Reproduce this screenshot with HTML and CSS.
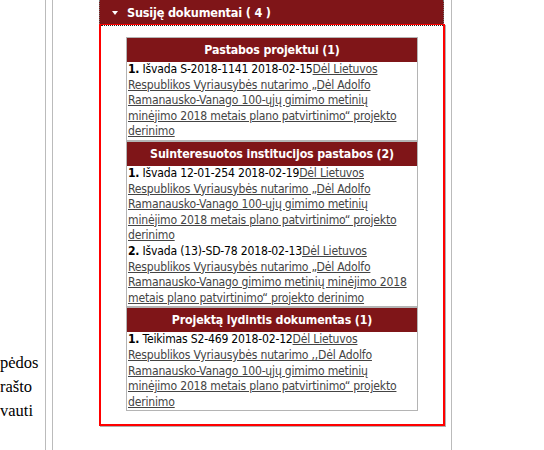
FILE: index.html
```html
<!DOCTYPE html>
<html lang="lt">
<head>
<meta charset="utf-8">
<link rel="stylesheet" href="styles.css">
</head>
<body>
<div class="page">
  <div class="left">
    <div class="left-text">
      <div>pėdos</div>
      <div>rašto</div>
      <div>vauti</div>
    </div>
  </div>
  <div class="main">
    <div class="panel">
      <div class="panel-head">
        <svg class="tri" width="6" height="4" viewBox="0 0 6 4"><polygon points="0,0 6,0 3,4" fill="#fff"/></svg>
        <span>Susiję dokumentai ( 4 )</span>
      </div>
      <div class="panel-box">
        <div class="dots"></div>
        <div class="docs">
          <div class="sec">
            <div class="sec-head">Pastabos projektui (1)</div>
            <div class="sec-body">
              <div class="item"><b>1.</b> Išvada S-2018-1141 2018-02-15<a href="#">Dėl Lietuvos Respublikos Vyriausybės nutarimo „Dėl Adolfo Ramanausko-Vanago 100-ųjų gimimo metinių minėjimo 2018 metais plano patvirtinimo“ projekto derinimo</a></div>
            </div>
          </div>
          <div class="sec">
            <div class="sec-head">Suinteresuotos institucijos pastabos (2)</div>
            <div class="sec-body">
              <div class="item"><b>1.</b> Išvada 12-01-254 2018-02-19<a href="#">Dėl Lietuvos Respublikos Vyriausybės nutarimo „Dėl Adolfo Ramanausko-Vanago 100-ųjų gimimo metinių minėjimo 2018 metais plano patvirtinimo“ projekto derinimo</a></div>
              <div class="item"><b>2.</b> Išvada (13)-SD-78 2018-02-13<a href="#">Dėl Lietuvos Respublikos Vyriausybės nutarimo „Dėl Adolfo Ramanausko-Vanago gimimo metinių minėjimo 2018 metais plano patvirtinimo“ projekto derinimo</a></div>
            </div>
          </div>
          <div class="sec">
            <div class="sec-head">Projektą lydintis dokumentas (1)</div>
            <div class="sec-body">
              <div class="item"><b>1.</b> Teikimas S2-469 2018-02-12<a href="#">Dėl Lietuvos Respublikos Vyriausybės nutarimo ,,Dėl Adolfo Ramanausko-Vanago 100-ųjų gimimo metinių minėjimo 2018 metais plano patvirtinimo“ projekto derinimo</a></div>
            </div>
          </div>
        </div>
      </div>
    </div>
  </div>
</div>
</body>
</html>
```
FILE: styles.css
```css
html, body {
  margin: 0;
  padding: 0;
  background: #fff;
}
.page {
  display: flex;
  height: 450px;
  overflow: hidden;
}
.left {
  width: 45px;
  flex: none;
  border-right: 1px solid #bbbbbb;
  overflow: hidden;
}
.left-text {
  padding-top: 351px;
  padding-right: 14px;
  text-align: right;
  font-family: "Liberation Serif", serif;
  font-size: 16.5px;
  line-height: 24px;
  color: #000;
  white-space: nowrap;
}
.main {
  width: 398px;
  flex: none;
  margin-left: 6px;
  border-left: 1px solid #bbbbbb;
  border-right: 1px solid #bbbbbb;
}
.panel {
  margin-left: 46px;
  width: 346px;
  font-family: "DejaVu Sans Condensed", "DejaVu Sans", sans-serif;
}
.panel-head {
  height: 24px;
  width: 343px;
  background: #7f1518;
  border-left: 1px dotted #777;
  border-right: 1px dotted #777;
  display: flex;
  align-items: center;
  color: #fff;
  font-weight: bold;
  font-size: 12.6px;
  letter-spacing: -0.2px;
}
.tri {
  margin-left: 12px;
  margin-right: 9px;
  margin-top: 1px;
}
.panel-box {
  border: 2px solid #ff0000;
  border-top-width: 1px;
  box-shadow: 1px 1px 0 #b0b0b0;
  padding: 0 25px 13px 25px;
}
.dots {
  margin: 0 -25px 11px -25px;
  border-top: 1px dotted #222;
}
.docs {
  width: 292px;
}
.sec {
  border: 1px solid #b4b4b4;
}
.sec-head {
  height: 24px;
  background: #7f1518;
  color: #fff;
  font-weight: bold;
  font-size: 12.3px;
  letter-spacing: -0.15px;
  display: flex;
  align-items: center;
  justify-content: center;
}
.sec-body {
  padding: 0 1px;
  font-size: 12.1px;
  letter-spacing: -0.2px;
  line-height: 15.6px;
  color: #000;
}
.item a {
  color: #444444;
  text-decoration: underline;
}
```
